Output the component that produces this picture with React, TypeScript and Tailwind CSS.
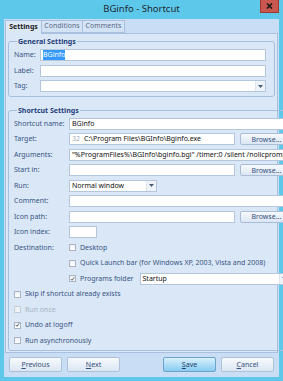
import type { ReactNode } from "react";

const labelCls = "text-[#3a5584]";

function Row({ label, children, lw = "w-[55px]" }: { label?: string; children?: ReactNode; lw?: string }) {
  return (
    <div className="flex h-[15.5px] items-center">
      <span className={`${lw} shrink-0 ${labelCls}`}>{label}</span>
      {children}
    </div>
  );
}

function Field({ value, className = "min-w-0 flex-1", children }: { value?: string; className?: string; children?: ReactNode }) {
  return (
    <div className={`flex h-[12px] items-center overflow-hidden whitespace-nowrap border border-[#b3c6dc] bg-white px-[2px] text-[#111] ${className}`}>
      {children ?? value}
    </div>
  );
}

function Combo({ value, className = "min-w-0 flex-1" }: { value?: string; className?: string }) {
  return (
    <div className={`flex h-[12px] items-center border border-[#b3c6dc] bg-white text-[#111] ${className}`}>
      <span className="min-w-0 flex-1 overflow-hidden whitespace-nowrap px-[2px]">{value}</span>
      <span className="flex h-full w-[10px] shrink-0 items-center justify-center border-l border-[#dde6f0] bg-[#eef3f9]">
        <svg width="5" height="3" viewBox="0 0 5 3">
          <path d="M0 0h5L2.5 3z" fill="#4a5a70" />
        </svg>
      </span>
    </div>
  );
}

function Browse() {
  return (
    <button className="ml-[5px] h-[12px] w-[52px] shrink-0 rounded-[2px] border border-[#a9bdd6] bg-gradient-to-b from-[#f7fafd] to-[#dbe6f3] leading-none text-[#34507c]">
      Browse...
    </button>
  );
}

function Check({ checked, label, disabled }: { checked?: boolean; label: string; disabled?: boolean }) {
  return (
    <div className="flex shrink-0 items-center">
      <span className={`flex h-[7px] w-[7px] items-center justify-center border ${disabled ? "border-[#c5ccd6] bg-[#eef1f5]" : "border-[#a8b4c4] bg-gradient-to-b from-[#eef0f3] to-[#ffffff]"}`}>
        {checked ? (
          <svg width="6" height="6" viewBox="0 0 6 6">
            <path d="M1 3l1.4 1.6L5 1" stroke="#333" strokeWidth="0.9" fill="none" />
          </svg>
        ) : null}
      </span>
      <span className={`ml-[4px] whitespace-nowrap ${disabled ? "text-[#a8b3c2]" : labelCls}`}>{label}</span>
    </div>
  );
}

function Btn({ children, primary, className = "" }: { children: ReactNode; primary?: boolean; className?: string }) {
  return (
    <button
      className={`h-[15px] w-[53px] rounded-[2px] border leading-none ${
        primary
          ? "border-[#6ea4cc] bg-gradient-to-b from-[#d9f1fd] to-[#86cbf0] text-[#1f3f6a]"
          : "border-[#adc1d9] bg-gradient-to-b from-[#f7fafd] to-[#dbe6f3] text-[#34507c]"
      } ${className}`}
    >
      {children}
    </button>
  );
}

export default function App() {
  return (
    <div className="flex h-[381px] w-[283px] flex-col bg-[#5ec8ea] font-['Noto_Sans',sans-serif] text-[7px]">
      <div className="relative h-[19px] shrink-0">
        <div className="pt-[3px] text-center text-[9.5px] leading-[12px] text-[#1d2833]">BGinfo - Shortcut</div>
        <div className="absolute right-[4px] top-0 flex h-[13px] w-[19px] items-center justify-center border border-t-0 border-[#9c3a34] bg-[#c9574f]">
          <svg width="7" height="6" viewBox="0 0 7 6">
            <path d="M1 0.5l5 5M6 0.5l-5 5" stroke="#1a1a1a" strokeWidth="1.6" />
          </svg>
        </div>
      </div>

      <div className="mx-[4px] mb-[4px] flex flex-1 flex-col bg-[#c9ddf4]">
        <div className="flex h-[14px] items-end pl-[1px]">
          <div className="z-10 -mb-px flex h-[14px] w-[37px] items-center justify-center border border-b-0 border-[#a9c1de] bg-[#dbe8f6] font-bold text-[#1a1a1a]">
            Settings
          </div>
          <div className="flex h-[13px] w-[41px] items-center justify-center border border-l-0 border-[#a9c1de] bg-[#d3e3f6] text-[#5a6b84]">
            Conditions
          </div>
          <div className="flex h-[13px] w-[42px] items-center justify-center border border-l-0 border-[#a9c1de] bg-[#d3e3f6] text-[#5a6b84]">
            Comments
          </div>
        </div>

        <div className="mx-[1px] flex h-[320px] flex-col border border-[#a9c1de] bg-[#d9e7f6] px-[2px] pt-[3px]">
          <fieldset className="rounded-[3px] border border-[#a6bfdc] pb-[2px] pl-[5px] pr-[8px] pt-[1.5px]">
            <legend className="ml-[3px] px-[1px] text-[7px] font-bold leading-[9px] text-[#1f3d7a]">General Settings</legend>
            <Row label="Name:" lw="w-[26px]">
              <Field>
                <span className="bg-[#3399ff] text-white">BGinfo</span>
              </Field>
            </Row>
            <Row label="Label:" lw="w-[26px]">
              <Field />
            </Row>
            <Row label="Tag:" lw="w-[26px]">
              <Combo />
            </Row>
          </fieldset>

          <fieldset className="mt-[8.5px] rounded-[3px] border border-[#a6bfdc] pb-[1.5px] pl-[5px] pr-[4px] pt-[1.5px]">
            <legend className="ml-[3px] px-[1px] text-[7px] font-bold leading-[9px] text-[#1f3d7a]">Shortcut Settings</legend>
            <Row label="Shortcut name:">
              <Field value="BGinfo" />
            </Row>
            <Row label="Target:">
              <Field>
                <span className="mr-[4px] text-[#a0a8b4]">32</span>C:\Program Files\BGInfo\Bginfo.exe
              </Field>
              <Browse />
            </Row>
            <Row label="Arguments:">
              <Field value={'"%ProgramFiles%\\BGInfo\\bginfo.bgi" /timer:0 /silent /nolicprompt'} />
            </Row>
            <Row label="Start in:">
              <Field />
              <Browse />
            </Row>
            <Row label="Run:">
              <Combo value="Normal window" className="w-[88px]" />
            </Row>
            <Row label="Comment:">
              <Field />
            </Row>
            <Row label="Icon path:">
              <Field />
              <Browse />
            </Row>
            <Row label="Icon index:">
              <Field className="w-[28px]" />
            </Row>
            <Row label="Destination:">
              <Check label="Desktop" />
            </Row>
            <Row>
              <Check label="Quick Launch bar (for Windows XP, 2003, Vista and 2008)" />
            </Row>
            <Row>
              <Check checked label="Programs folder" />
              <Combo value="Startup" className="ml-[6px] mr-[2px] min-w-0 flex-1" />
            </Row>
            <div className="flex h-[15.5px] items-center">
              <Check label="Skip if shortcut already exists" />
            </div>
            <div className="flex h-[15.5px] items-center">
              <Check disabled label="Run once" />
            </div>
            <div className="flex h-[15.5px] items-center">
              <Check checked label="Undo at logoff" />
            </div>
            <div className="flex h-[15.5px] items-center">
              <Check label="Run asynchronously" />
            </div>
          </fieldset>
        </div>

        <div className="flex items-center pl-[5px] pr-[5px] pt-[4px]">
          <Btn>
            <u>P</u>revious
          </Btn>
          <Btn className="ml-[5px]">
            <u>N</u>ext
          </Btn>
          <Btn primary className="ml-auto">
            <u>S</u>ave
          </Btn>
          <Btn className="ml-[5px]">
            <u>C</u>ancel
          </Btn>
        </div>
      </div>
    </div>
  );
}
